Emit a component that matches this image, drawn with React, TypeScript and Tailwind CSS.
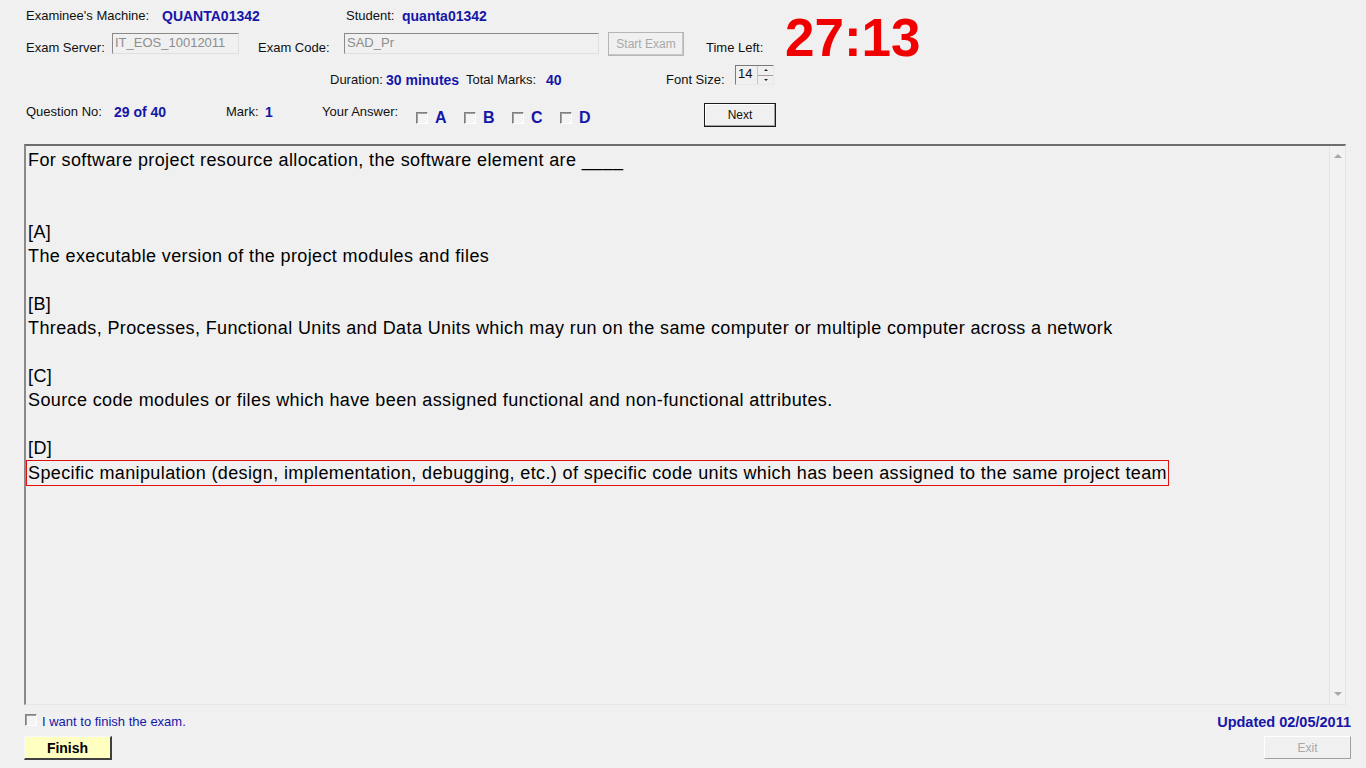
const blue = "text-[#1616a8]";

function Check() {
    return (
        <span className="inline-block w-[12px] h-[12px] border-t border-l border-t-[#808080] border-l-[#808080] border-b border-r border-b-white border-r-white bg-[#f4f4f4] shadow-[inset_1px_1px_0_#a0a0a0]" />
    );
}

function Field({ value, w }: { value: string; w: string }) {
    return (
        <div
            className={`${w} h-[21px] mt-[1px] border border-t-[#8a8a8a] border-l-[#8a8a8a] border-b-[#e0e0e0] border-r-[#e0e0e0] bg-[#f0f0f0] pl-[2px] text-[#8d8d8d] text-[13px] leading-[17px]`}
        >
            {value}
        </div>
    );
}

export default function App() {
    const options = [
        { key: "A", text: "The executable version of the project modules and files" },
        {
            key: "B",
            text: "Threads, Processes, Functional Units and Data Units which may run on the same computer or multiple computer across a network",
        },
        { key: "C", text: "Source code modules or files which have been assigned functional and non-functional attributes." },
        {
            key: "D",
            text: "Specific manipulation (design, implementation, debugging, etc.) of specific code units which has been assigned to the same project team",
        },
    ];

    return (
        <div className="w-[1366px] h-[768px] bg-[#f0f0f0] flex flex-col text-[13px] leading-[16px] text-[#111] font-['Liberation_Sans',Arial,sans-serif] overflow-hidden">
            {/* Top block: rows 1 & 2 + timer */}
            <div className="h-[64px] flex">
                <div className="w-[785px] flex flex-col">
                    {/* Row 1 */}
                    <div className="h-[32px] pt-[8px] flex">
                        <span className="ml-[26px] w-[136px]">Examinee's Machine:</span>
                        <span className={`w-[184px] font-bold text-[14px] ${blue}`}>QUANTA01342</span>
                        <span className="w-[56px]">Student:</span>
                        <span className={`font-bold text-[14px] ${blue}`}>quanta01342</span>
                    </div>
                    {/* Row 2 */}
                    <div className="h-[32px] flex items-start">
                        <span className="ml-[26px] w-[86px] mt-[8px]">Exam Server:</span>
                        <Field value="IT_EOS_10012011" w="w-[127px]" />
                        <span className="ml-[19px] w-[86px] mt-[8px]">Exam Code:</span>
                        <Field value="SAD_Pr" w="w-[255px]" />
                        <button className="ml-[9px] w-[76px] h-[24px] border border-[#b5b5b5] bg-[#f0f0f0] shadow-[inset_-1px_-1px_0_#c8c8c8] text-[#a8a8a8] text-[12px]">
                            Start Exam
                        </button>
                        <span className="ml-[22px] mt-[8px]">Time Left:</span>
                    </div>
                </div>
                <div className="pt-[11px] text-[53px] leading-[54px] font-bold text-[#f00000]">27:13</div>
            </div>

            {/* Row 3 */}
            <div className="h-[32px] flex items-start">
                <span className="ml-[330px] w-[56px] mt-[8px]">Duration:</span>
                <span className={`w-[80px] mt-[8px] font-bold text-[14px] ${blue}`}>30 minutes</span>
                <span className="w-[80px] mt-[8px]">Total Marks:</span>
                <span className={`w-[120px] mt-[8px] font-bold text-[14px] ${blue}`}>40</span>
                <span className="w-[69px] mt-[8px]">Font Size:</span>
                <div className="mt-[1px] w-[39px] h-[20px] flex border border-t-[#7a7a7a] border-l-[#7a7a7a] border-b-[#e8e8e8] border-r-[#e8e8e8] bg-[#f0f0f0]">
                    <span className="flex-1 pl-[2px] text-[13px] leading-[15px]">14</span>
                    <div className="w-[16px] flex flex-col border-l border-[#c8c8c8]">
                        <div className="flex-1 flex items-center justify-center border-b border-[#a0a0a0]">
                            <span className="w-0 h-0 border-l-[2px] border-r-[2px] border-b-[2px] border-l-transparent border-r-transparent border-b-[#222]" />
                        </div>
                        <div className="flex-1 flex items-center justify-center">
                            <span className="w-0 h-0 border-l-[2px] border-r-[2px] border-t-[2px] border-l-transparent border-r-transparent border-t-[#222]" />
                        </div>
                    </div>
                </div>
            </div>

            {/* Row 4 */}
            <div className="h-[48px] flex items-start">
                <span className="ml-[26px] w-[88px] mt-[8px]">Question No:</span>
                <span className={`w-[112px] mt-[8px] font-bold text-[14px] ${blue}`}>29 of 40</span>
                <span className="w-[39px] mt-[8px]">Mark:</span>
                <span className={`w-[57px] mt-[8px] font-bold text-[14px] ${blue}`}>1</span>
                <span className="w-[94px] mt-[8px]">Your Answer:</span>
                <div className="flex mt-[14px]">
                    {["A", "B", "C", "D"].map((k) => (
                        <label key={k} className="w-[48px] flex items-center gap-[7px]">
                            <Check />
                            <span className={`font-bold text-[16px] leading-[16px] ${blue}`}>{k}</span>
                        </label>
                    ))}
                </div>
                <button className="ml-[96px] mt-[7px] w-[72px] h-[24px] border border-[#1a1a1a] bg-[#f0f0f0] shadow-[inset_-1px_-1px_0_#a0a0a0,inset_1px_1px_0_#ffffff] text-[12px] text-[#111]">
                    Next
                </button>
            </div>

            {/* Question panel */}
            <div className="ml-[24px] w-[1322px] h-[561px] flex border-t-2 border-l-2 border-t-[#6e6e6e] border-l-[#8a8a8a] border-b border-r border-b-[#e6e6e6] border-r-[#e6e6e6]">
                <div className="flex-1 pl-[2px] pt-[2px] text-[18px] leading-[24px] tracking-[0.38px] text-black">
                    <div>For software project resource allocation, the software element are ____</div>
                    <div className="h-[48px]" />
                    {options.map((o, i) => (
                        <div key={o.key} className={i > 0 ? "mt-[24px]" : ""}>
                            <div>[{o.key}]</div>
                            {o.key === "D" ? (
                                <div className="ml-[-2px] inline-block border border-[#e01010] pl-[1px] pr-[1px] leading-[24px]">
                                    {o.text}
                                </div>
                            ) : (
                                <div>{o.text}</div>
                            )}
                        </div>
                    ))}
                </div>
                {/* Scrollbar */}
                <div className="w-[16px] border-l border-[#e4e4e4] flex flex-col items-center justify-between py-[8px] bg-[#f2f2f2]">
                    <span className="w-0 h-0 border-l-[4px] border-r-[4px] border-b-[4px] border-l-transparent border-r-transparent border-b-[#a8a8a8]" />
                    <span className="w-0 h-0 border-l-[4px] border-r-[4px] border-t-[4px] border-l-transparent border-r-transparent border-t-[#a8a8a8]" />
                </div>
            </div>

            {/* Bottom */}
            <div className="mt-[10px] h-[14px] flex items-center">
                <span className="ml-[25px]">
                    <Check />
                </span>
                <span className={`ml-[5px] text-[13px] ${blue}`}>I want to finish the exam.</span>
                <span className={`ml-auto mr-[15px] font-bold text-[14.5px] ${blue}`}>Updated 02/05/2011</span>
            </div>
            <div className="mt-[7px] flex items-start">
                <button className="ml-[24px] w-[88px] h-[24px] bg-[#ffffc0] border-t border-l border-[#f8f8f8] border-b-2 border-r-2 border-b-[#404040] border-r-[#404040] font-bold text-[14px] text-black">
                    Finish
                </button>
                <button className="ml-auto mr-[15px] w-[87px] h-[23px] border border-t-white border-l-white border-b-[#a0a0a0] border-r-[#a0a0a0] text-[#a8a8a8] text-[12px]">
                    Exit
                </button>
            </div>
        </div>
    );
}
